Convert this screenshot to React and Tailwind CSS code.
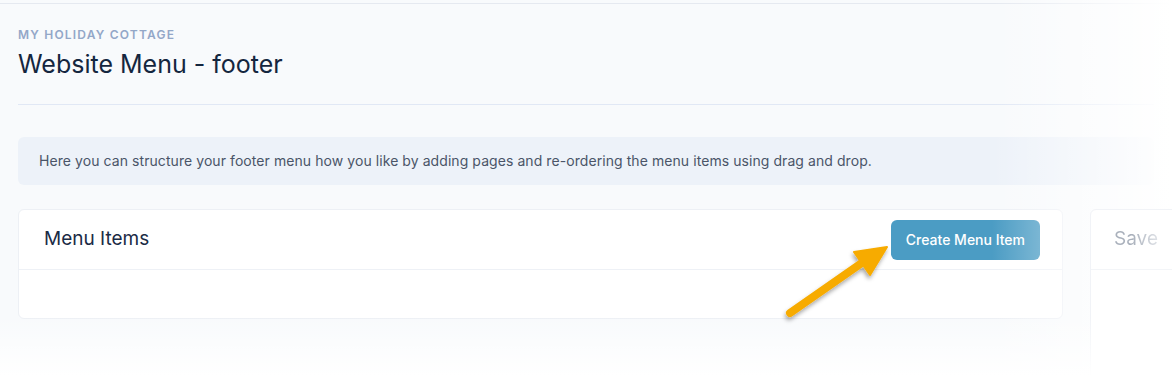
export default function App() {
  return (
    <div className="relative h-[376px] w-[1172px] overflow-hidden bg-[#f8fafc] font-['Inter',sans-serif]">
      <div className="mt-[3px] border-t border-[#e5e9f0]" />

      <div className="px-[18px]">
        <header className="border-b border-[#e1e8f5] pb-[23px] pt-[23px]">
          <div className="text-[12px] font-semibold uppercase leading-[16px] tracking-[0.1em] text-[#93a7c8]">
            My Holiday Cottage
          </div>
          <h1 className="mt-[4px] text-[25px] leading-[34px] text-[#14263f]">
            Website Menu - footer
          </h1>
        </header>

        <div className="mt-[32px] rounded-md bg-[#edf2f9] px-[21px] py-[14px] text-[14px] leading-[20px] tracking-[0.005em] text-[#4a5568]">
          Here you can structure your footer menu how you like by adding pages and re-ordering the menu items using drag and drop.
        </div>

        <div className="mt-[24px] flex gap-[27px]">
          <section className="h-[110px] w-[1045px] shrink-0 rounded-md border border-[#edf0f5] bg-white">
            <div className="flex h-[60px] items-center justify-between border-b border-[#eef1f6] pl-[25px] pr-[22px]">
              <h2 className="text-[19px] text-[#1a2b45]">Menu Items</h2>
              <button className="h-[40px] rounded-md bg-[#4b9cc4] px-[15px] text-[14px] font-medium text-white">
                Create Menu Item
              </button>
            </div>
          </section>

          <section className="relative z-10 h-[200px] w-[240px] shrink-0 rounded-md border border-[#f1f3f7] bg-white">
            <div className="flex h-[60px] items-center border-b border-[#f3f5f8] pl-[23px]">
              <span className="bg-gradient-to-r from-[#a9b0bb] from-40% to-[#dfe2e7] bg-clip-text text-[19px] text-transparent">
                Save
              </span>
            </div>
          </section>
        </div>
      </div>

      <div className="pointer-events-none absolute inset-y-0 right-0 w-[180px] bg-gradient-to-r from-transparent to-white" />
      <div className="pointer-events-none absolute inset-x-0 bottom-0 z-20 h-[60px] bg-gradient-to-b from-transparent to-white" />

      <svg className="pointer-events-none absolute left-0 top-0 z-30" width="1172" height="376">
        <defs>
          <filter id="sh" x="-20%" y="-20%" width="140%" height="140%">
            <feDropShadow dx="-1" dy="3" stdDeviation="2" floodColor="#000" floodOpacity="0.35" />
          </filter>
        </defs>
        <g filter="url(#sh)" fill="#f7ab04" stroke="#f7ab04" strokeLinejoin="round" strokeLinecap="round">
          <line x1="790" y1="313" x2="866" y2="260" strokeWidth="8" />
          <polygon points="887,247 854,252 870,275" strokeWidth="2" />
        </g>
      </svg>
    </div>
  )
}
